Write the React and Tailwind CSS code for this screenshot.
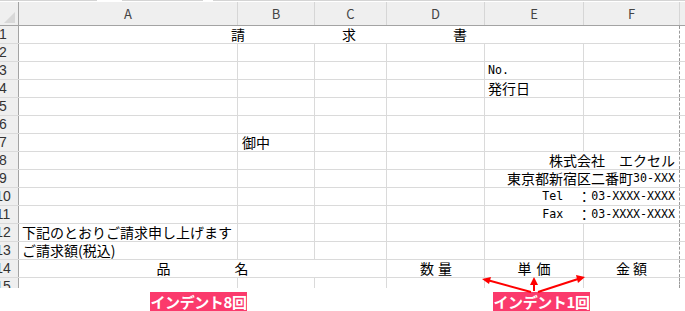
import React from "react";

const jp = "font-['Noto_Sans_CJK_JP',sans-serif]";
const mono = "font-['DejaVu_Sans_Mono',monospace] text-[11.6px]";

function RowNum({ n }) {
  return (
    <div className="w-[19px] h-full shrink-0 border-r border-[#a3a3a3] bg-[#efefef] overflow-hidden">
      <div className="w-[38px] -ml-[16px] text-center font-['Liberation_Sans',sans-serif] text-[14px] leading-[17px] text-[#333]">
        {n}
      </div>
    </div>
  );
}

function Cell({ w, last, children, className = "" }) {
  return (
    <div
      className={`${w} h-full shrink-0 border-r ${
        last ? "border-dashed border-[#9a9a9a]" : "border-[#dadada]"
      } flex items-center whitespace-nowrap leading-[17px] ${className}`}
    >
      {children}
    </div>
  );
}

function Row({ n, children, partial }) {
  return (
    <div className={`flex ${partial ? "h-[10px] overflow-hidden" : "h-[18px] border-b border-[#dadada]"}`}>
      <RowNum n={n} />
      {children}
      <div className="flex-1 h-full" />
    </div>
  );
}

function Plain({ n, partial }) {
  return (
    <Row n={n} partial={partial}>
      <Cell w="w-[219px]" />
      <Cell w="w-[77px]" />
      <Cell w="w-[72px]" />
      <Cell w="w-[98px]" />
      <Cell w="w-[99px]" />
      <Cell w="w-[96px]" last />
    </Row>
  );
}

function RightInfo({ n, children }) {
  return (
    <Row n={n}>
      <Cell w="w-[219px]" />
      <Cell w="w-[77px]" />
      <Cell w="w-[72px]" />
      <Cell w="w-[98px]" />
      <Cell w="w-[195px]" last className="justify-end pr-[4px]">
        {children}
      </Cell>
    </Row>
  );
}

export default function App() {
  return (
    <div className={`relative w-[685px] h-[311px] overflow-hidden bg-white text-[14px] text-black ${jp}`}>
      {/* formula bar edge */}
      <div className="h-[2px] flex">
        <div className="w-[97px] h-[1px] bg-[#d4d4d4]" />
        <div className="w-[25px]" />
        <div className="w-[81px] h-[1px] bg-[#d4d4d4]" />
        <div className="w-[10px]" />
        <div className="flex-1 h-[1px] bg-[#d4d4d4]" />
      </div>

      {/* column headers */}
      <div className="flex h-[24px] bg-[#efefef] border-b border-[#a3a3a3] text-[13px] text-[#444]">
        <div className="w-[19px] h-full shrink-0 border-r border-[#a3a3a3] flex items-end justify-end pr-[3px] pb-[2px]">
          <svg width="11" height="11" viewBox="0 0 11 11">
            <polygon points="11,0 11,11 0,11" fill="#d8d8d8" />
          </svg>
        </div>
        <div className="w-[219px] shrink-0 border-r border-[#d6d6d6] flex items-center justify-center">A</div>
        <div className="w-[77px] shrink-0 border-r border-[#d6d6d6] flex items-center justify-center">B</div>
        <div className="w-[72px] shrink-0 border-r border-[#d6d6d6] flex items-center justify-center">C</div>
        <div className="w-[98px] shrink-0 border-r border-[#d6d6d6] flex items-center justify-center">D</div>
        <div className="w-[99px] shrink-0 border-r border-[#d6d6d6] flex items-center justify-center">E</div>
        <div className="w-[96px] shrink-0 border-r border-[#d6d6d6] flex items-center justify-center">F</div>
        <div className="flex-1" />
      </div>

      {/* 1 title */}
      <Row n="1">
        <Cell w="w-[661px]" last className="justify-center gap-[97px]">
          <span>請</span>
          <span>求</span>
          <span>書</span>
        </Cell>
      </Row>
      <Plain n="2" />
      <Row n="3">
        <Cell w="w-[219px]" />
        <Cell w="w-[77px]" />
        <Cell w="w-[72px]" />
        <Cell w="w-[98px]" />
        <Cell w="w-[99px]" className="pl-[3px]">
          <span className={mono}>No.</span>
        </Cell>
        <Cell w="w-[96px]" last />
      </Row>
      <Row n="4">
        <Cell w="w-[219px]" />
        <Cell w="w-[77px]" />
        <Cell w="w-[72px]" />
        <Cell w="w-[98px]" />
        <Cell w="w-[99px]" className="pl-[3px]">発行日</Cell>
        <Cell w="w-[96px]" last />
      </Row>
      <Plain n="5" />
      <Plain n="6" />
      <Row n="7">
        <Cell w="w-[219px]" />
        <Cell w="w-[77px]" className="pl-[4px]">御中</Cell>
        <Cell w="w-[72px]" />
        <Cell w="w-[98px]" />
        <Cell w="w-[99px]" />
        <Cell w="w-[96px]" last />
      </Row>
      <RightInfo n="8">株式会社　エクセル</RightInfo>
      <RightInfo n="9">
        <span>東京都新宿区二番町</span>
        <span className={mono}>30-XXX</span>
      </RightInfo>
      <RightInfo n="10">
        <span className={mono}>Tel</span>
        <span>　：</span>
        <span className={mono}>03-XXXX-XXXX</span>
      </RightInfo>
      <RightInfo n="11">
        <span className={mono}>Fax</span>
        <span>　：</span>
        <span className={mono}>03-XXXX-XXXX</span>
      </RightInfo>
      <Row n="12">
        <Cell w="w-[219px]" className="pl-[3px]">下記のとおりご請求申し上げます</Cell>
        <Cell w="w-[77px]" />
        <Cell w="w-[72px]" />
        <Cell w="w-[98px]" />
        <Cell w="w-[99px]" />
        <Cell w="w-[96px]" last />
      </Row>
      <Row n="13">
        <Cell w="w-[219px]" className="pl-[3px]">ご請求額(税込)</Cell>
        <Cell w="w-[77px]" />
        <Cell w="w-[72px]" />
        <Cell w="w-[98px]" />
        <Cell w="w-[99px]" />
        <Cell w="w-[96px]" last />
      </Row>
      <Row n="14">
        <Cell w="w-[368px]" className="justify-center gap-[64px]">
          <span>品</span>
          <span>名</span>
        </Cell>
        <Cell w="w-[98px]" className="justify-end pr-[32px] gap-[4px]">
          <span>数</span>
          <span>量</span>
        </Cell>
        <Cell w="w-[99px]" className="justify-center gap-[5px]">
          <span>単</span>
          <span>価</span>
        </Cell>
        <Cell w="w-[96px]" last className="justify-center gap-[3px]">
          <span>金</span>
          <span>額</span>
        </Cell>
      </Row>
      <Plain n="15" partial />

      {/* annotation labels */}
      <div className="flex mt-[4px] text-[15px] tracking-[-0.4px] font-bold text-white leading-[19px] whitespace-nowrap">
        <div className="ml-[150px] w-[97px] h-[19px] bg-[#fb3a6c] flex items-center justify-center overflow-hidden">
          インデント8回
        </div>
        <div className="ml-[246px] w-[97px] h-[19px] bg-[#fb3a6c] flex items-center justify-center overflow-hidden">
          インデント1回
        </div>
      </div>

      {/* arrows */}
      <svg className="absolute left-0 top-0 pointer-events-none" width="685" height="311" viewBox="0 0 685 311">
        <g stroke="#ff0000" strokeWidth="2" fill="none">
          <line x1="534" y1="291" x2="534" y2="283" />
          <line x1="531" y1="292" x2="489" y2="280.5" />
          <line x1="538" y1="292" x2="578" y2="279" />
        </g>
        <g fill="#ff0000">
          <polygon points="534,277 530,285 538,285" />
          <polygon points="482,279 491,277 489,284" />
          <polygon points="585,277 576,275 578,283" />
        </g>
      </svg>
    </div>
  );
}
